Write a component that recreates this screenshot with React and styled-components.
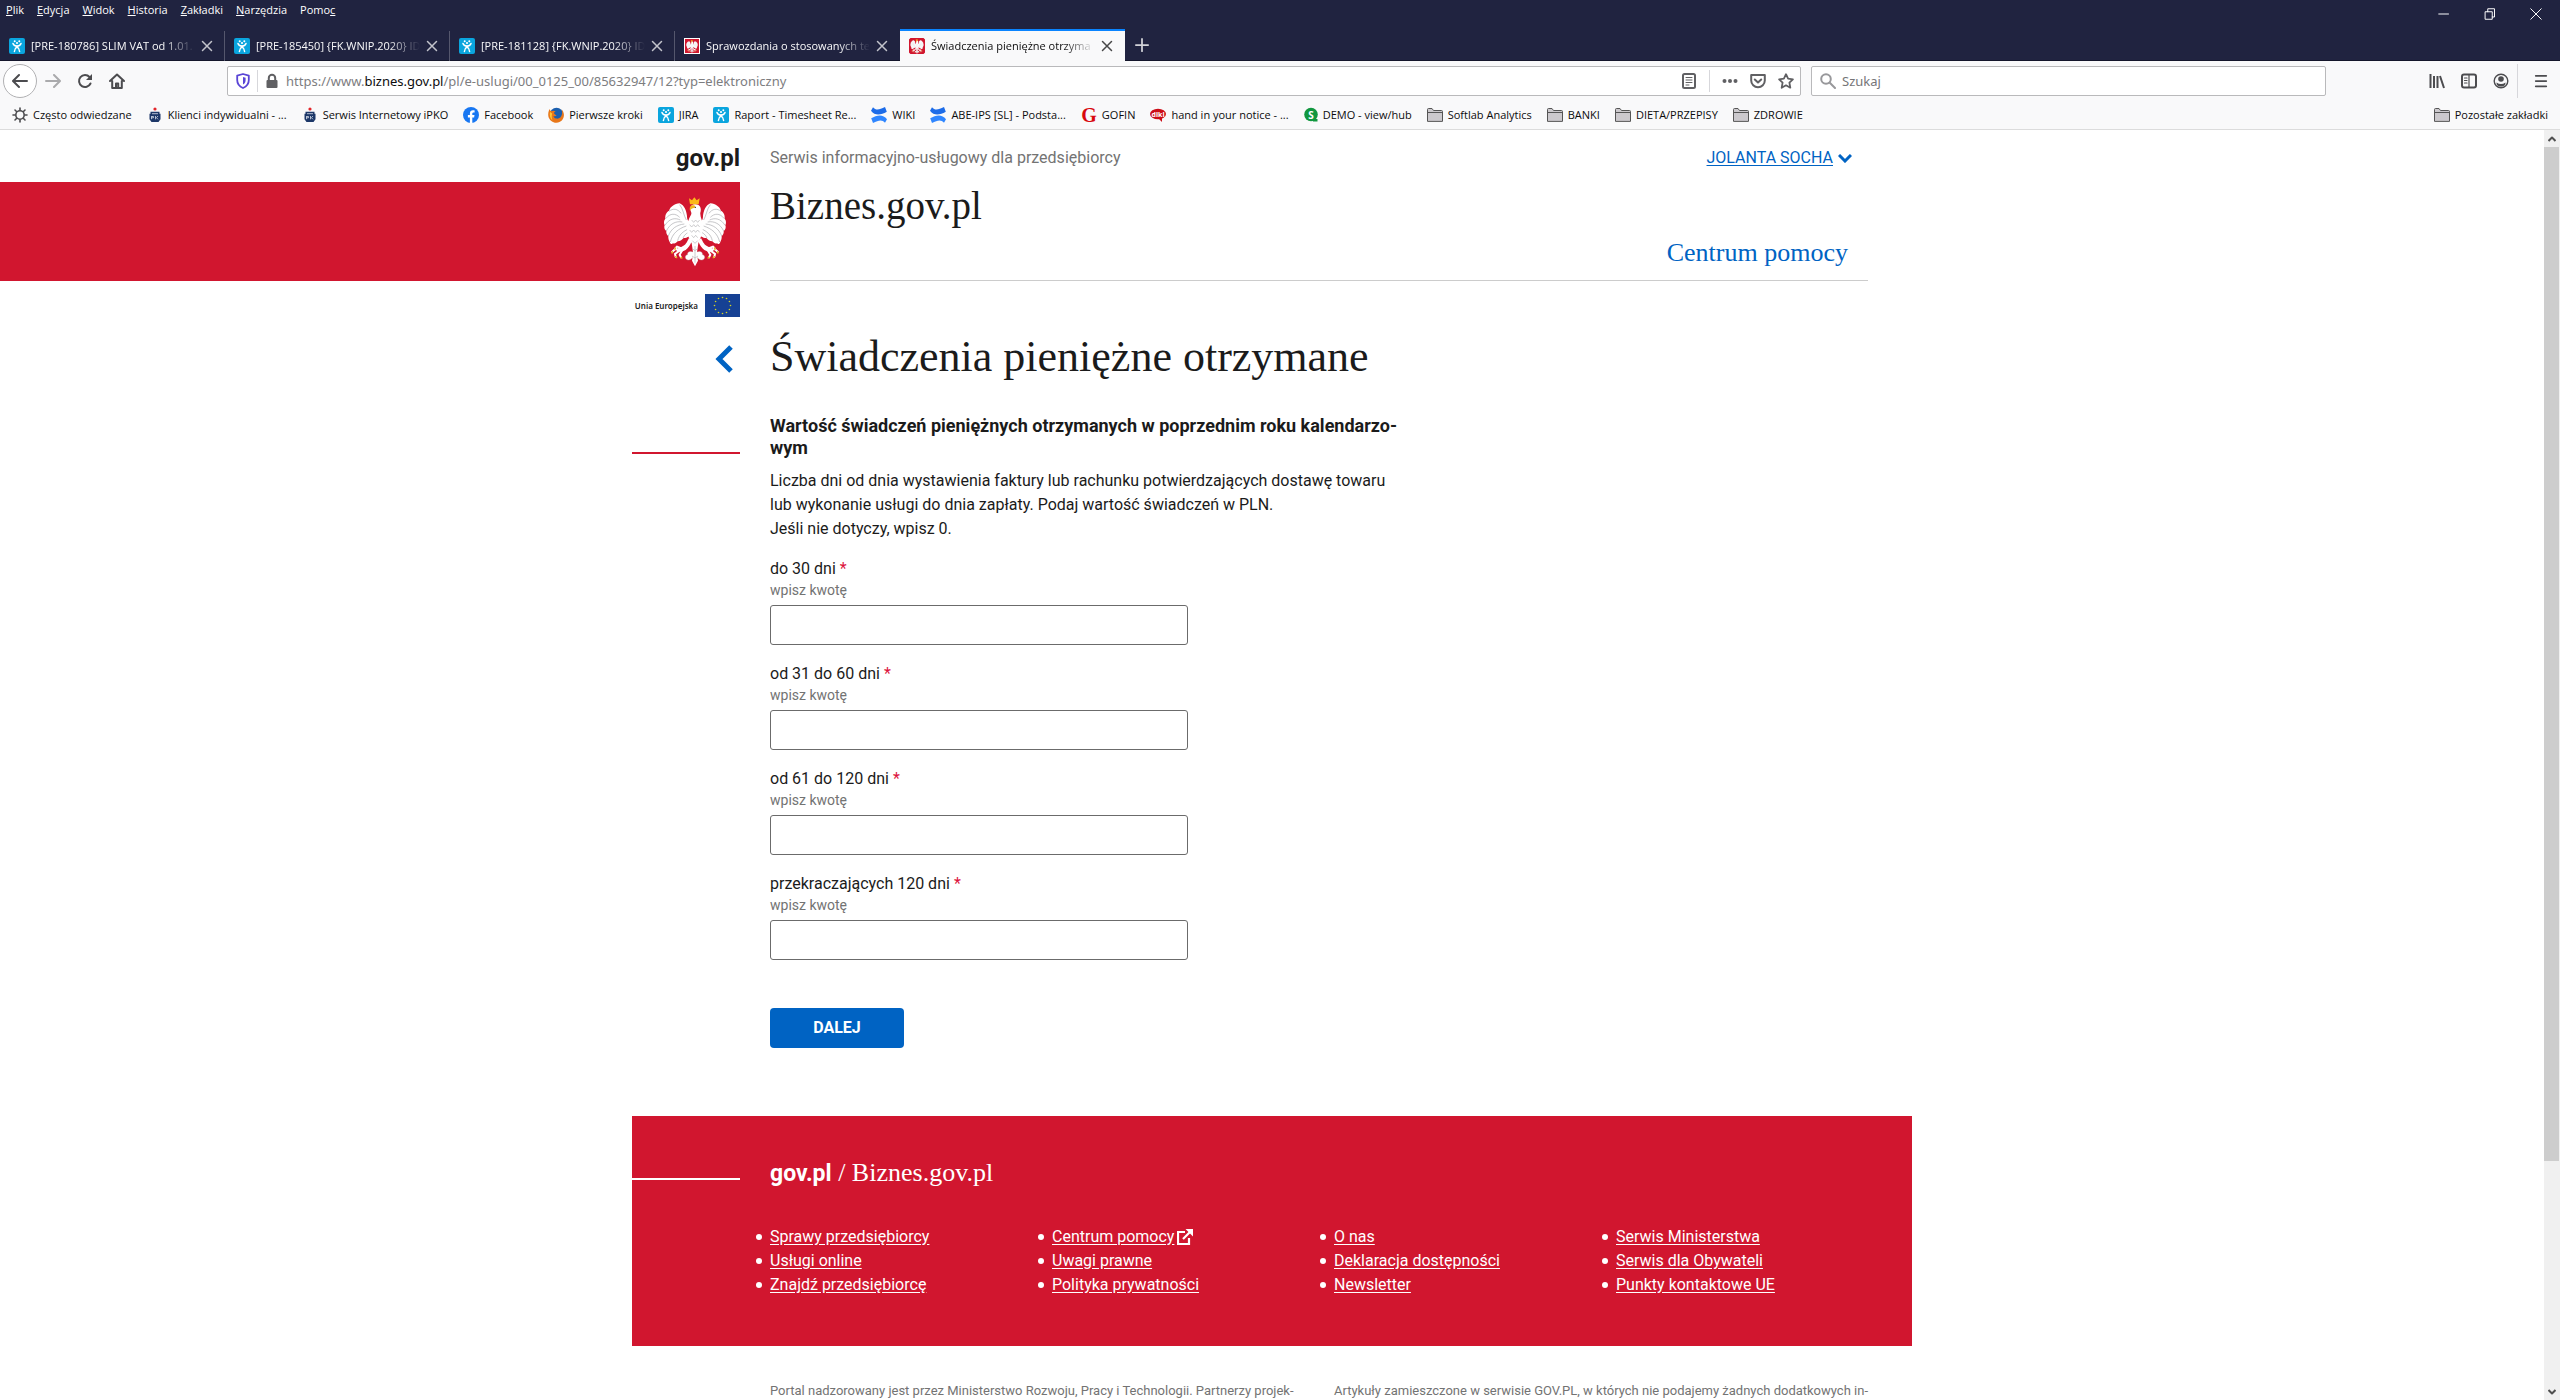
import React from 'react'
import styled, { createGlobalStyle } from 'styled-components'

const red = '#d1162f'
const blue = '#0063c3'
const ink = '#1b1b1b'
const serif = `'Liberation Serif', serif`
const ui = `'Open Sans', 'Noto Sans', sans-serif`

const GlobalStyle = createGlobalStyle`
  * {
    box-sizing: border-box;
  }
  body {
    margin: 0;
    color: ${ink};
    background: #fff;
    font-family: Roboto, sans-serif;
    font-size: 16px;
    line-height: 24px;
  }
  button, input {
    font: inherit;
  }
  svg {
    display: block;
    flex: none;
  }
`

/* ---------- browser window ---------- */

const Window = styled.div`
  display: flex;
  flex-direction: column;
  height: 100vh;
  overflow: hidden;
`

const Chrome = styled.header`
  flex: none;
  font-family: ${ui};
  font-size: 11px;
  line-height: 16px;
`

const TitleBar = styled.div`
  display: flex;
  justify-content: space-between;
  height: 29px;
  padding: 2px 18px 0 6px;
  color: #fff;
  background: #202340;
`

const Menu = styled.nav`
  display: flex;
  gap: 13px;
`

const MenuButton = styled.button`
  align-self: flex-start;
  padding: 0;
  border: 0;
  color: #fff;
  background: none;
`

const WindowButtons = styled.div`
  display: flex;
  align-items: flex-start;
  gap: 34px;
  padding-top: 6px;
`

const PlainButton = styled.button`
  display: flex;
  align-items: center;
  justify-content: center;
  padding: 0;
  border: 0;
  color: inherit;
  background: none;
`

const TabStrip = styled.div`
  display: flex;
  height: 32px;
  color: #fff;
  background: #202340;
  border-bottom: 1px solid #14162b;
`

const Tab = styled.div`
  display: flex;
  align-items: center;
  gap: 6px;
  width: 225px;
  height: 32px;
  padding: 0 12px 0 9px;
  color: ${({ $active }) => ($active ? '#0c0c0d' : '#f9f9fa')};
  background: ${({ $active }) => ($active ? '#f9f9fa' : 'none')};
  border-top: 2px solid ${({ $active }) => ($active ? '#0a84ff' : 'transparent')};
  box-shadow: ${({ $divided }) => ($divided ? 'inset -1px 0 #55576d' : 'none')};
`

const TabTitle = styled.span`
  flex: 1;
  overflow: hidden;
  white-space: nowrap;
  mask-image: linear-gradient(to left, transparent, #000 32px);
`

const NewTab = styled(PlainButton)`
  width: 34px;
`

const Toolbar = styled.div`
  display: flex;
  align-items: center;
  height: 40px;
  padding: 0 12px 0 3px;
  color: #4c4c4f;
  background: #f9f9fa;
`

const NavButtons = styled.div`
  display: flex;
  align-items: center;
  gap: 16px;
  width: 224px;
`

const BackButton = styled(PlainButton)`
  width: 34px;
  height: 34px;
  margin-right: -8px;
  border: 1px solid #b1b1b3;
  border-radius: 50%;
  background: #fff;
`

const Field = styled.div`
  display: flex;
  align-items: center;
  height: 30px;
  border: 1px solid #b9b9bb;
  border-radius: 2px;
  background: #fff;
  font-family: 'Noto Sans', sans-serif;
  font-size: 13px;
`

const AddressBar = styled(Field)`
  flex: 1559;
  gap: 6px;
  padding: 0 6px 0 7px;
`

const Address = styled.div`
  flex: 1;
  color: #7d7d7f;
  white-space: nowrap;
  b {
    color: #0c0c0d;
    font-weight: 400;
  }
`

const PageActions = styled.div`
  display: flex;
  align-items: center;
  gap: 12px;
`

const Rule = styled.span`
  width: 1px;
  height: ${({ $tall }) => ($tall ? 34 : 22)}px;
  background: #d7d7db;
`

const SearchBar = styled(Field)`
  flex: 497;
  gap: 6px;
  margin-left: 10px;
  padding: 0 8px;
  input {
    flex: 1;
    padding: 0;
    border: 0;
    outline: 0;
    background: none;
  }
  input::placeholder {
    color: #757577;
  }
`

const ToolButtons = styled.div`
  display: flex;
  align-items: center;
  justify-content: flex-end;
  gap: 16px;
  width: 222px;
  ${Rule} {
    margin-left: -8px;
  }
`

const Bookmarks = styled.nav`
  display: flex;
  justify-content: space-between;
  height: 29px;
  padding: 0 12px;
  background: #f9f9fa;
  border-bottom: 1px solid #dcdcdc;
`

const BookmarkList = styled.div`
  display: flex;
  gap: 15px;
`

const Bookmark = styled.a`
  display: flex;
  align-items: center;
  gap: 5px;
  color: #0c0c0d;
  text-decoration: none;
  white-space: nowrap;
`

const Viewport = styled.div`
  display: flex;
  flex: 1;
  min-height: 0;
`

const Page = styled.div`
  flex: 1;
  overflow: hidden;
`

const Scrollbar = styled.div`
  display: flex;
  flex-direction: column;
  align-items: center;
  width: 16px;
  background: #f0f0f0;
`

const ScrollArrow = styled(PlainButton)`
  width: 16px;
  height: 17px;
  color: #505050;
`

const ScrollTrack = styled.div`
  flex: 1;
  width: 16px;
`

const ScrollThumb = styled.div`
  width: 15px;
  height: 82%;
  background: #cdcdcd;
`

/* ---------- page ---------- */

const Shell = styled.div`
  display: grid;
  grid-template-columns: 1fr 108px minmax(0, 1128px) 44px 1fr;
`

const Rail = styled.div`
  grid-column: 1 / span 2;
  display: flex;
  flex-direction: column;
  align-items: flex-end;
`

const Main = styled.div`
  grid-column: 3;
  margin-left: 30px;
`

const GovLink = styled.a`
  height: 52px;
  padding-top: 15px;
  color: ${ink};
  font-size: 24px;
  font-weight: 700;
  line-height: 26px;
  text-decoration: none;
`

const Banner = styled.div`
  display: flex;
  align-items: center;
  justify-content: flex-end;
  width: 100%;
  height: 99px;
  padding-right: 13px;
  background: ${red};
`

const Union = styled.div`
  display: flex;
  align-items: center;
  gap: 7px;
  margin-top: 13px;
  font-family: 'Noto Sans', sans-serif;
  font-size: 8px;
  font-weight: 600;
  line-height: 12px;
`

const BackLink = styled.a`
  display: block;
  margin: 28px 7px 0 0;
  color: ${blue};
`

const RailLine = styled.span`
  width: 108px;
  height: 2px;
  margin-top: ${({ $top }) => $top}px;
  background: ${({ $light }) => ($light ? '#fff' : red)};
`

const SiteHeader = styled.div`
  height: 151px;
  border-bottom: 1px solid #ccc;
`

const HeaderRow = styled.div`
  display: flex;
  justify-content: space-between;
  padding: 16px 16px 0 0;
  color: #737373;
`

const UserLink = styled.a`
  display: flex;
  align-items: center;
  gap: 5px;
  color: ${blue};
  text-underline-offset: 2px;
`

const SiteName = styled.div`
  margin-top: 14px;
  font-family: ${serif};
  font-size: 39px;
  line-height: 44px;
`

const HelpLink = styled.a`
  display: block;
  margin-top: 3px;
  padding-right: 20px;
  color: ${blue};
  font-family: ${serif};
  font-size: 26px;
  line-height: 44px;
  text-align: right;
  text-decoration: none;
`

const Heading = styled.h1`
  margin: 50px 0 0;
  font-family: ${serif};
  font-size: 44px;
  font-weight: 400;
  line-height: 52px;
`

const Form = styled.form`
  margin: 0 0 68px;
`

const Question = styled.h2`
  margin: 32px 0 0;
  font-size: 18px;
  font-weight: 700;
  line-height: 22px;
`

const Intro = styled.p`
  margin: 10px 0 0;
`

const FormRows = styled.div`
  display: flex;
  flex-direction: column;
  gap: 17px;
  margin-top: 16px;
`

const FormRow = styled.div`
  label {
    display: block;
  }
  small {
    display: block;
    color: #737373;
    font-size: 14px;
    line-height: 18px;
  }
  sup {
    margin-left: 4px;
    color: #dc143c;
    font-size: 16px;
    line-height: 16px;
    vertical-align: baseline;
  }
  input {
    display: block;
    width: 418px;
    height: 40px;
    margin-top: 6px;
    padding: 0 12px;
    border: 1px solid #6b6b6b;
    border-radius: 3px;
    background: #fff;
  }
`

const Submit = styled.button`
  display: block;
  width: 134px;
  height: 40px;
  margin-top: 48px;
  border: 0;
  border-radius: 4px;
  color: #fff;
  background: ${blue};
  font-weight: 700;
`

const FooterBox = styled.footer`
  grid-column: 2 / span 3;
  display: grid;
  grid-template-columns: 108px 1fr;
  column-gap: 30px;
  height: 230px;
  color: #fff;
  background: ${red};
`

const FooterMain = styled.div`
  margin-right: 44px;
`

const FooterTitle = styled.div`
  margin-top: 42px;
  font-family: ${serif};
  font-size: 26px;
  line-height: 30px;
  b {
    font-family: Roboto, sans-serif;
    font-size: 23px;
  }
`

const FooterLinks = styled.div`
  display: grid;
  grid-template-columns: repeat(4, 1fr);
  column-gap: 30px;
  margin-top: 36px;
  ul {
    margin: 0;
    padding: 0;
    list-style: none;
  }
  li {
    display: flex;
    align-items: center;
    gap: 8px;
    margin-left: -14px;
  }
  li::before {
    content: '';
    width: 6px;
    height: 6px;
    border-radius: 50%;
    background: #fff;
  }
  a {
    display: inline-flex;
    align-items: center;
    gap: 3px;
    color: #fff;
    text-underline-offset: 2px;
  }
`

const Notes = styled.div`
  display: grid;
  grid-template-columns: 1fr 1fr;
  column-gap: 30px;
  margin-top: 34px;
  color: #737373;
  font-size: 13px;
  line-height: 22px;
  white-space: nowrap;
`

/* ---------- icons ---------- */

const Icon = ({ size = 16, width = 2, children, ...rest }) => (
  <svg
    width={size}
    height={size}
    viewBox="0 0 16 16"
    fill="none"
    stroke="currentColor"
    strokeWidth={width}
    strokeLinecap="round"
    strokeLinejoin="round"
    aria-hidden="true"
    {...rest}
  >
    {children}
  </svg>
)

const CloseIcon = () => (
  <Icon size={12} width={2} opacity="0.75">
    <path d="M2 2l12 12M14 2L2 14" />
  </Icon>
)

const JiraIcon = () => (
  <Icon width={1.5} stroke="#fff">
    <rect width="16" height="16" rx="2" fill="#0aa5de" stroke="none" />
    <path d="M4 5.500c.6 2 2.200 2.600 4 2.600s3.400-.6 4-2.600M8 8.200v1M5.400 13.500c0-2.500 1-3.600 2.600-4.600 1.600 1 2.600 2.100 2.600 4.600" />
    <g fill="#fff" stroke="none">
      <circle cx="5.700" cy="3.200" r="1" />
      <circle cx="10.300" cy="3.200" r="1" />
      <circle cx="8" cy="5" r="1.100" />
    </g>
  </Icon>
)

const ConfluenceIcon = () => (
  <svg width="16" height="16" viewBox="0 0 16 16" aria-hidden="true">
    <path d="M0 3.800L2 .2c3.200 3.800 6.500 2.400 12-.1L15.800 4.800C10 8.200 4 9.200 0 3.800z" fill="#1d6ce8" />
    <path d="M16 12.200l-2 3.600c-3.200-3.800-6.500-2.400-12 .1L.2 11.200C6 7.800 12 6.800 16 12.200z" fill="#2f86ff" />
  </svg>
)

const PkoIcon = () => (
  <svg width="16" height="16" viewBox="0 0 16 16" aria-hidden="true">
    <circle cx="8" cy="2" r="1.600" fill="#e3262b" />
    <path d="M3.500 4.800h9v2h1v5.500L11.500 15h-7l-2-2.700V6.800h1z" fill="#1c3768" />
    <path d="M5 6.700h6M4.500 9.200v3M4.500 9.500h2v1.300h-2M8.500 9v3.300M11 9l-1.600 1.700L11 12.300" fill="none" stroke="#d8deea" strokeWidth=".8" />
  </svg>
)

const FacebookIcon = () => (
  <svg width="16" height="16" viewBox="0 0 16 16" aria-hidden="true">
    <circle cx="8" cy="8" r="8" fill="#1877f2" />
    <path d="M6.900 16v-5.500H4.900V8.100h2V6.400c0-2 1.200-3.100 3-3.100.9 0 1.700.1 1.700.1v2h-1c-1 0-1.300.6-1.300 1.200v1.500h2.200l-.4 2.400H9.300V16z" fill="#fff" />
  </svg>
)

const FirefoxIcon = () => (
  <svg width="16" height="16" viewBox="0 0 16 16" aria-hidden="true">
    <circle cx="8.500" cy="7.500" r="6.800" fill="#1b5fae" />
    <path d="M1.500 2C.3 4.500 0 7 .4 9.500 1.500 13.500 5 16 8.500 15.800c4.500-.3 7.300-3.600 7.400-7.600 0-2.500-1-4.700-2.300-6 .5 1.500.7 3 .5 4.500-.6 3.600-3.200 5.500-6 4.800-1.600-.5-2.600-1.500-2.500-2.600 1 .5 2.200.3 3-.5C7 8 5.500 6.500 6.200 5.300l1.500-.6C6.500 3.500 4.700 3.300 3.400 4.200 2.200 3.600 1.800 2.800 1.500 2z" fill="#e8771a" />
    <path d="M2 5C1.400 8 2 11.500 4.500 13.500 3.600 11 3.500 8.500 4.200 6.500z" fill="#ffc535" />
  </svg>
)

const GIcon = () => (
  <svg width="16" height="16" viewBox="0 0 16 16" aria-hidden="true">
    <text x="8" y="15" textAnchor="middle" fontFamily="Liberation Serif" fontWeight="700" fontSize="20" fill="#d8090f">
      G
    </text>
  </svg>
)

const DikiIcon = () => (
  <svg width="16" height="16" viewBox="0 0 16 16" aria-hidden="true">
    <ellipse cx="8" cy="7" rx="8" ry="5.200" fill="#cc0d17" />
    <path d="M8 11l4 4v-4z" fill="#cc0d17" />
    <text x="8" y="9.500" textAnchor="middle" fontFamily="Open Sans" fontWeight="700" fontSize="7" fill="#fff">
      diki
    </text>
  </svg>
)

const HubIcon = () => (
  <svg width="14" height="16" viewBox="0 0 14 16" aria-hidden="true">
    <circle cx="7" cy="7.500" r="6.800" fill="#11973f" />
    <path d="M8 12h5.500v2.500H9z" fill="#11973f" />
    <text x="7" y="11.500" textAnchor="middle" fontFamily="Open Sans" fontWeight="700" fontSize="10" fill="#fff">
      S
    </text>
  </svg>
)

const FolderIcon = () => (
  <Icon width={1}>
    <path d="M.5 14V2.500q0-1 1-1H5l1.500 2h8q1 0 1 1V14z" fill="#ccc9cd" stroke="#555" />
    <path d="M.5 5.500h15" stroke="#555" />
  </Icon>
)

const GearIcon = () => (
  <Icon width={1.6} stroke="#4c4c4f">
    <circle cx="8" cy="8" r="4.200" />
    <path d="M8 1v2M8 13v2M1 8h2M13 8h2M3 3l1.500 1.500M11.500 11.500L13 13M13 3l-1.500 1.500M4.500 11.500L3 13" />
  </Icon>
)

const Wing = (props) => (
  <g {...props}>
    <path
      d="M90 54C74 56 62 64 58 76 48 82 46 92 47 100 42 106 42 114 45 120 42 126 45 134 50 137 49 144 52 150 56 152 55 160 58 166 60 170 62 176 66 178 70 174 76 176 80 172 84 168 92 168 98 162 102 158 114 158 122 150 130 142V112C116 112 112 104 112 92 110 76 104 60 90 54z"
      fill="#fff"
    />
    <path
      d="M58 78C70 68 84 70 94 84M48 100C62 82 78 84 90 96M46 120C58 100 76 96 92 104M50 137C60 116 78 106 98 110M56 152C64 130 82 118 104 116M62 170C68 144 86 130 110 122M84 166C88 148 100 138 118 130M100 158C104 148 114 140 126 136M90 58C100 70 102 90 110 104"
      fill="none"
      stroke="#a9a9ad"
      strokeWidth="2"
    />
    <path d="M118 158C112 170 108 180 96 184L82 193 80 198 96 199 108 194C116 188 122 180 126 168z" fill="#fff" />
    <path
      d="M96 190L76 192 68 199M92 194L76 206 78 214M98 194L90 208 94 216M96 189L82 184 78 188"
      fill="none"
      stroke="#fff"
      strokeWidth="6"
      strokeLinecap="round"
    />
    <path d="M68 199l-1 4M78 214l3 3M94 216l3 2M77 188l-1 4" stroke="#e8b21c" strokeWidth="4" strokeLinecap="round" />
    <path
      d="M130 200C120 196 112 200 114 208 108 208 104 216 110 222 118 228 128 220 132 212"
      fill="#fff"
      stroke="#b5b5b8"
      strokeWidth="1"
    />
  </g>
)

const Eagle = ({ width, height }) => (
  <svg width={width} height={height} viewBox="40 35 192 210" role="img" aria-label="Godło Polski">
    <Wing />
    <Wing transform="translate(272 0) scale(-1 1)" />
    <path d="M122 92C128 84 124 80 122 74 120 64 128 56 138 57 152 58 156 70 152 82 150 96 162 110 160 128 158 148 150 162 146 174L136 240 126 174C118 160 112 146 112 130 112 114 118 100 122 92z" fill="#fff" />
    <path d="M130 176C134 186 128 196 130 206L127 226 136 243 145 226 142 206C144 196 138 186 142 176z" fill="#fff" />
    <path
      d="M126 104l6 7 6-7 6 7 6-7M120 118l6 7 6-7 6 7 6-7 6 7M120 134l6 7 6-7 6 7 6-7 6 7M126 150l6 7 6-7 6 7M128 166l8 8 8-8M136 182v50M128 190l8 6 8-6M127 212l9 6 9-6"
      fill="none"
      stroke="#b3b3b6"
      strokeWidth="2"
    />
    <path d="M121 57l-3-18 9 6 7-9 7 9 9-6-3 18z" fill="#fbb917" />
    <path d="M134 60C124 58 118 64 121 76 126 68 134 68 138 66z" fill="#f2b51c" />
    <circle cx="137" cy="66" r="2" fill="#222" />
  </svg>
)

const Crest = styled.span`
  display: flex;
  align-items: center;
  justify-content: center;
  width: 16px;
  height: 16px;
  background: ${red};
  border: 1px solid ${({ $framed }) => ($framed ? '#fff' : red)};
  border-radius: ${({ $framed }) => ($framed ? 0 : 2)}px;
`

const UnionFlag = () => (
  <svg width="35" height="23" viewBox="0 0 35 23" aria-hidden="true">
    <rect width="35" height="23" fill="#164194" />
    {Array.from({ length: 12 }, (_, i) => {
      const a = (i * Math.PI) / 6
      return <circle key={i} cx={17.5 + 8 * Math.sin(a)} cy={11.5 - 8 * Math.cos(a)} r=".8" fill="#d6d422" />
    })}
  </svg>
)

const ExternalIcon = () => (
  <Icon width={2} strokeLinecap="butt" strokeLinejoin="miter">
    <path d="M8 3H1v12h11V9M6 10l8-8" strokeWidth="2.200" />
    <path d="M8.500 0H16v7.500z" fill="currentColor" stroke="none" />
  </Icon>
)

/* ---------- data ---------- */

const menu = [
  ['', 'P', 'lik'],
  ['', 'E', 'dycja'],
  ['', 'W', 'idok'],
  ['', 'H', 'istoria'],
  ['', 'Z', 'akładki'],
  ['', 'N', 'arzędzia'],
  ['Pomo', 'c', ''],
]

const tabs = [
  { title: '[PRE-180786] SLIM VAT od 1.01.', icon: <JiraIcon />, divided: true },
  { title: '[PRE-185450] {FK.WNIP.2020} ID', icon: <JiraIcon />, divided: true },
  { title: '[PRE-181128] {FK.WNIP.2020} ID', icon: <JiraIcon />, divided: true },
  { title: 'Sprawozdania o stosowanych te', icon: <Crest $framed><Eagle width={12} height={13} /></Crest> },
  { title: 'Świadczenia pieniężne otrzyma', icon: <Crest><Eagle width={14} height={15} /></Crest>, active: true },
]

const bookmarks = [
  ['Często odwiedzane', <GearIcon />],
  ['Klienci indywidualni - ...', <PkoIcon />],
  ['Serwis Internetowy iPKO', <PkoIcon />],
  ['Facebook', <FacebookIcon />],
  ['Pierwsze kroki', <FirefoxIcon />],
  ['JIRA', <JiraIcon />],
  ['Raport - Timesheet Re...', <JiraIcon />],
  ['WIKI', <ConfluenceIcon />],
  ['ABE-IPS [SL] - Podsta...', <ConfluenceIcon />],
  ['GOFIN', <GIcon />],
  ['hand in your notice - ...', <DikiIcon />],
  ['DEMO - view/hub', <HubIcon />],
  ['Softlab Analytics', <FolderIcon />],
  ['BANKI', <FolderIcon />],
  ['DIETA/PRZEPISY', <FolderIcon />],
  ['ZDROWIE', <FolderIcon />],
]

const fields = [
  ['do30', 'do 30 dni'],
  ['do60', 'od 31 do 60 dni'],
  ['do120', 'od 61 do 120 dni'],
  ['ponad120', 'przekraczających 120 dni'],
]

const footerLinks = [
  ['Sprawy przedsiębiorcy', 'Usługi online', 'Znajdź przedsiębiorcę'],
  ['Centrum pomocy', 'Uwagi prawne', 'Polityka prywatności'],
  ['O nas', 'Deklaracja dostępności', 'Newsletter'],
  ['Serwis Ministerstwa', 'Serwis dla Obywateli', 'Punkty kontaktowe UE'],
]

/* ---------- sections ---------- */

const BrowserChrome = () => (
  <Chrome>
    <TitleBar>
      <Menu>
        {menu.map(([before, key, after]) => (
          <MenuButton key={before + key}>
            {before}
            <u>{key}</u>
            {after}
          </MenuButton>
        ))}
      </Menu>
      <WindowButtons>
        <PlainButton aria-label="Minimalizuj">
          <Icon size={12} width={1.3}>
            <path d="M1 8h13" />
          </Icon>
        </PlainButton>
        <PlainButton aria-label="Przywróć">
          <Icon size={12} width={1.3}>
            <path d="M2 5h9v10H2zM5 5V1h9v11h-3" />
          </Icon>
        </PlainButton>
        <PlainButton aria-label="Zamknij">
          <Icon size={12} width={1.3}>
            <path d="M1 1l14 14M15 1L1 15" />
          </Icon>
        </PlainButton>
      </WindowButtons>
    </TitleBar>
    <TabStrip>
      {tabs.map(({ title, icon, active, divided }) => (
        <Tab key={title} $active={active} $divided={divided}>
          {icon}
          <TabTitle>{title}</TabTitle>
          <PlainButton aria-label="Zamknij kartę">
            <CloseIcon />
          </PlainButton>
        </Tab>
      ))}
      <NewTab aria-label="Nowa karta">
        <Icon size={14} width={2} opacity="0.8">
          <path d="M8 1v14M1 8h14" />
        </Icon>
      </NewTab>
    </TabStrip>
    <Toolbar>
      <NavButtons>
        <BackButton aria-label="Wstecz">
          <Icon>
            <path d="M15 8H1.500M7 2L1 8l6 6" />
          </Icon>
        </BackButton>
        <PlainButton aria-label="Dalej">
          <Icon opacity="0.45">
            <path d="M1 8h13.500M9 2l6 6-6 6" />
          </Icon>
        </PlainButton>
        <PlainButton aria-label="Odśwież">
          <Icon>
            <path d="M13.500 10.500A6 6 0 1 1 12.500 4" />
            <path d="M15 1v6H9z" fill="currentColor" stroke="none" />
          </Icon>
        </PlainButton>
        <PlainButton aria-label="Strona startowa">
          <Icon>
            <path d="M1 8l7-6.500L15 8M3.200 8v7h9.600V8" />
            <path d="M7 14v-3.500h2.200V14" />
          </Icon>
        </PlainButton>
      </NavButtons>
      <AddressBar>
        <Icon stroke="#5a45d6" width={1.8}>
          <path d="M8 1l5.800 1.600v4.400c0 4-2.500 6.600-5.800 8-3.300-1.400-5.800-4-5.800-8V2.600z" />
          <path d="M8 4v7.500c1.800-1 2.600-2.500 2.600-4.500V4.700z" fill="#5a45d6" stroke="none" />
        </Icon>
        <Rule />
        <Icon stroke="#606063">
          <rect x="2.500" y="7" width="11" height="8" rx="1" fill="#606063" stroke="none" />
          <path d="M4.800 8V5a3.200 3.200 0 0 1 6.400 0v3" />
        </Icon>
        <Address>
          https://www.<b>biznes.gov.pl</b>/pl/e-uslugi/00_0125_00/85632947/12?typ=elektroniczny
        </Address>
        <PageActions>
          <Icon stroke="#606063">
            <rect x="2" y="1" width="12" height="14" rx="1.500" />
            <path d="M5 4.500h6M5 7h6M5 9.500h6M5 12h3" strokeWidth="1" />
          </Icon>
          <Rule />
          <Icon fill="#606063" stroke="none">
            <circle cx="2.500" cy="8" r="2" />
            <circle cx="8" cy="8" r="2" />
            <circle cx="13.500" cy="8" r="2" />
          </Icon>
          <Icon stroke="#606063">
            <path d="M1.200 2h13.600v5.500a6.800 6.800 0 0 1-13.600 0zM4.800 6.500L8 9.500l3.200-3" />
          </Icon>
          <Icon stroke="#606063" width={1.8}>
            <path d="M8 1.200l2.100 4.500 4.800.6-3.500 3.400.9 5L8 12.300l-4.300 2.400.9-5L1.100 6.300l4.800-.6z" />
          </Icon>
        </PageActions>
      </AddressBar>
      <SearchBar>
        <Icon stroke="#98989b">
          <circle cx="6" cy="6" r="4.800" />
          <path d="M9.800 9.800L15 15" />
        </Icon>
        <input type="search" aria-label="Szukaj" placeholder="Szukaj" />
      </SearchBar>
      <ToolButtons>
        <PlainButton aria-label="Biblioteka">
          <Icon strokeLinecap="butt">
            <path d="M1.500 1v14M5 3v12M8.500 3v12M11 3l4 12" />
          </Icon>
        </PlainButton>
        <PlainButton aria-label="Panel boczny">
          <Icon>
            <rect x="1" y="1.500" width="14" height="13" rx="2" />
            <path d="M8 2v12M3.500 5H6M3.500 7.500H6M3.500 10H6" strokeWidth="1.200" />
          </Icon>
        </PlainButton>
        <PlainButton aria-label="Konto">
          <Icon width={1.4}>
            <circle cx="8" cy="8" r="6.800" />
            <circle cx="8" cy="6" r="2.800" fill="currentColor" stroke="none" />
            <path d="M3.500 9.500q4.500 3 9 0c0 3-2 4-4.500 4s-4.500-1-4.500-4z" fill="currentColor" stroke="none" />
          </Icon>
        </PlainButton>
        <Rule $tall />
        <PlainButton aria-label="Menu">
          <Icon size={14}>
            <path d="M2 2h12M2 8h12M2 14h12" />
          </Icon>
        </PlainButton>
      </ToolButtons>
    </Toolbar>
    <Bookmarks>
      <BookmarkList>
        {bookmarks.map(([name, icon]) => (
          <Bookmark key={name} href="#">
            {icon}
            {name}
          </Bookmark>
        ))}
      </BookmarkList>
      <Bookmark href="#">
        <FolderIcon />
        Pozostałe zakładki
      </Bookmark>
    </Bookmarks>
  </Chrome>
)

const FormField = ({ id, label }) => (
  <FormRow>
    <label htmlFor={id}>
      {label}
      <sup>*</sup>
      <small>wpisz kwotę</small>
    </label>
    <input id={id} type="text" />
  </FormRow>
)

const Footer = () => (
  <FooterBox>
    <RailLine $light $top={62} />
    <FooterMain>
      <FooterTitle>
        <b>gov.pl</b> / Biznes.gov.pl
      </FooterTitle>
      <FooterLinks>
        {footerLinks.map((links) => (
          <ul key={links[0]}>
            {links.map((name) => (
              <li key={name}>
                <a href="#">
                  {name}
                  {name === 'Centrum pomocy' && <ExternalIcon />}
                </a>
              </li>
            ))}
          </ul>
        ))}
      </FooterLinks>
    </FooterMain>
  </FooterBox>
)

const App = () => (
  <Window>
    <GlobalStyle />
    <BrowserChrome />
    <Viewport>
      <Page>
        <Shell>
          <Rail>
            <GovLink href="#">gov.pl</GovLink>
            <Banner>
              <Eagle width={64} height={70} />
            </Banner>
            <Union>
              Unia Europejska
              <UnionFlag />
            </Union>
            <BackLink href="#" aria-label="Wstecz">
              <svg width="18" height="28" viewBox="0 0 18 28" fill="none" stroke="currentColor" strokeWidth="5">
                <path d="M16 2L4 14l12 12" />
              </svg>
            </BackLink>
            <RailLine $top={79} />
          </Rail>
          <Main>
            <SiteHeader>
              <HeaderRow>
                Serwis informacyjno-usługowy dla przedsiębiorcy
                <UserLink href="#">
                  JOLANTA SOCHA
                  <svg width="14" height="9" viewBox="0 0 14 9" fill="none" stroke="currentColor" strokeWidth="3">
                    <path d="M1 1l6 6 6-6" />
                  </svg>
                </UserLink>
              </HeaderRow>
              <SiteName>Biznes.gov.pl</SiteName>
              <HelpLink href="#">Centrum pomocy</HelpLink>
            </SiteHeader>
            <Heading>Świadczenia pieniężne otrzymane</Heading>
            <Form>
              <Question>
                Wartość świadczeń pieniężnych otrzymanych w poprzednim roku kalendarzo-
                <br />
                wym
              </Question>
              <Intro>
                Liczba dni od dnia wystawienia faktury lub rachunku potwierdzających dostawę towaru
                <br />
                lub wykonanie usługi do dnia zapłaty. Podaj wartość świadczeń w PLN.
                <br />
                Jeśli nie dotyczy, wpisz 0.
              </Intro>
              <FormRows>
                {fields.map(([id, label]) => (
                  <FormField key={id} id={id} label={label} />
                ))}
              </FormRows>
              <Submit type="button">DALEJ</Submit>
            </Form>
          </Main>
          <Footer />
          <Main>
            <Notes>
              <div>Portal nadzorowany jest przez Ministerstwo Rozwoju, Pracy i Technologii. Partnerzy projek-</div>
              <div>Artykuły zamieszczone w serwisie GOV.PL, w których nie podajemy żadnych dodatkowych in-</div>
            </Notes>
          </Main>
        </Shell>
      </Page>
      <Scrollbar>
        <ScrollArrow aria-label="W górę">
          <Icon size={8} strokeLinecap="butt" width={4}>
            <path d="M1 12l7-7 7 7" />
          </Icon>
        </ScrollArrow>
        <ScrollTrack>
          <ScrollThumb />
        </ScrollTrack>
        <ScrollArrow aria-label="W dół">
          <Icon size={8} strokeLinecap="butt" width={4}>
            <path d="M1 4l7 7 7-7" />
          </Icon>
        </ScrollArrow>
      </Scrollbar>
    </Viewport>
  </Window>
)

export default App
